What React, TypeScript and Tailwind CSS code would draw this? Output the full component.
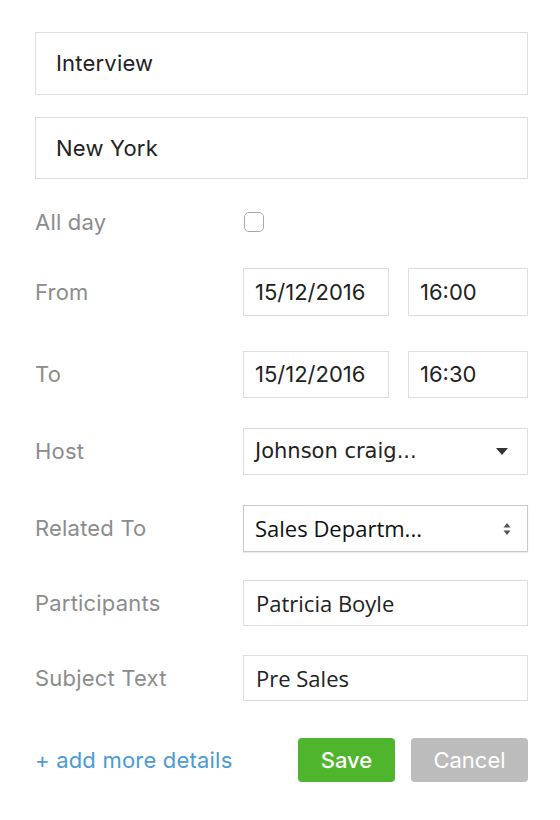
import React, { useState } from 'react';

const label = "text-[22px] tracking-[0.2px] text-[#8c8c8c]";
const box = "border border-[#dedede] bg-white flex items-center text-[#222]";
const sysFont = { fontFamily: "'Open Sans', sans-serif" };

const App: React.FC = () => {
  const [allDay, setAllDay] = useState(false);

  return (
    <div className="min-h-screen bg-white pl-[35px] pr-[32px] pt-[32px]" style={{ fontFamily: "Inter, Lato, sans-serif" }}>
      {/* Title + location */}
      <div className={`${box} h-[63px] pl-[20px] text-[22px] tracking-[0.2px]`}>Interview</div>
      <div className={`${box} mt-[22px] h-[62px] pl-[20px] text-[22px] tracking-[0.2px]`}>New York</div>

      {/* All day */}
      <div className="mt-[33px] flex h-[20px] items-center">
        <div className={`${label} w-[209px]`}>All day</div>
        <button
          onClick={() => setAllDay(!allDay)}
          className="h-[20px] w-[20px] rounded-[5px] border border-[#a8a8a8] bg-white"
        >
          {allDay && <span className="block text-[14px] leading-none text-[#333]">✓</span>}
        </button>
      </div>

      {/* From */}
      <div className="mt-[36px] flex h-[48px] items-center">
        <div className={`${label} w-[208px]`}>From</div>
        <div className={`${box} h-full w-[146px] pl-[11px] text-[22px]`}>15/12/2016</div>
        <div className={`${box} ml-[19px] h-full flex-1 pl-[11px] text-[22px]`}>16:00</div>
      </div>

      {/* To */}
      <div className="mt-[35px] flex h-[47px] items-center">
        <div className={`${label} w-[208px]`}>To</div>
        <div className={`${box} h-full w-[146px] pl-[11px] text-[22px]`}>15/12/2016</div>
        <div className={`${box} ml-[19px] h-full flex-1 pl-[11px] text-[22px]`}>16:30</div>
      </div>

      {/* Host */}
      <div className="mt-[30px] flex h-[47px] items-center">
        <div className={`${label} w-[208px]`}>Host</div>
        <div className={`${box} h-full flex-1 justify-between pl-[11px] pr-[19px] text-[21px]`} style={{ fontFamily: "'DejaVu Sans', sans-serif" }}>
          <span>Johnson craig...</span>
          <svg width="12" height="7" viewBox="0 0 12 7"><path d="M0 0h12L6 7z" fill="#333" /></svg>
        </div>
      </div>

      {/* Related To */}
      <div className="mt-[30px] flex h-[47px] items-center">
        <div className={`${label} w-[208px]`}>Related To</div>
        <div className="flex h-full flex-1 items-center justify-between border border-[#c9c9c9] bg-white pl-[11px] pr-[16px] text-[22px] text-[#111] shadow-[0_1px_1px_rgba(0,0,0,0.08)]" style={sysFont}>
          <span>Sales Departm...</span>
          <svg width="8" height="14" viewBox="0 0 8 14">
            <path d="M4 1L7.5 5.5H0.5z" fill="#555" />
            <path d="M4 13L7.5 8.5H0.5z" fill="#555" />
          </svg>
        </div>
      </div>

      {/* Participants */}
      <div className="mt-[28px] flex h-[46px] items-center">
        <div className={`${label} w-[208px]`}>Participants</div>
        <div className={`${box} h-full flex-1 pl-[12px] text-[22px]`} style={sysFont}>Patricia Boyle</div>
      </div>

      {/* Subject */}
      <div className="mt-[29px] flex h-[46px] items-center">
        <div className={`${label} w-[208px]`}>Subject Text</div>
        <div className={`${box} h-full flex-1 pl-[12px] text-[22px]`} style={sysFont}>Pre Sales</div>
      </div>

      {/* Actions */}
      <div className="mt-[37px] flex h-[44px] items-center">
        <a className="flex-1 cursor-pointer text-[22px] tracking-[0.2px] text-[#4b9bd5]">+ add more details</a>
        <button className="h-full w-[97px] rounded-[4px] bg-[#4eb52d] text-[22px] font-medium text-white">Save</button>
        <button className="ml-[16px] h-full w-[117px] rounded-[4px] bg-[#bcbcbc] text-[22px] text-white">Cancel</button>
      </div>
    </div>
  );
};

export default App;
